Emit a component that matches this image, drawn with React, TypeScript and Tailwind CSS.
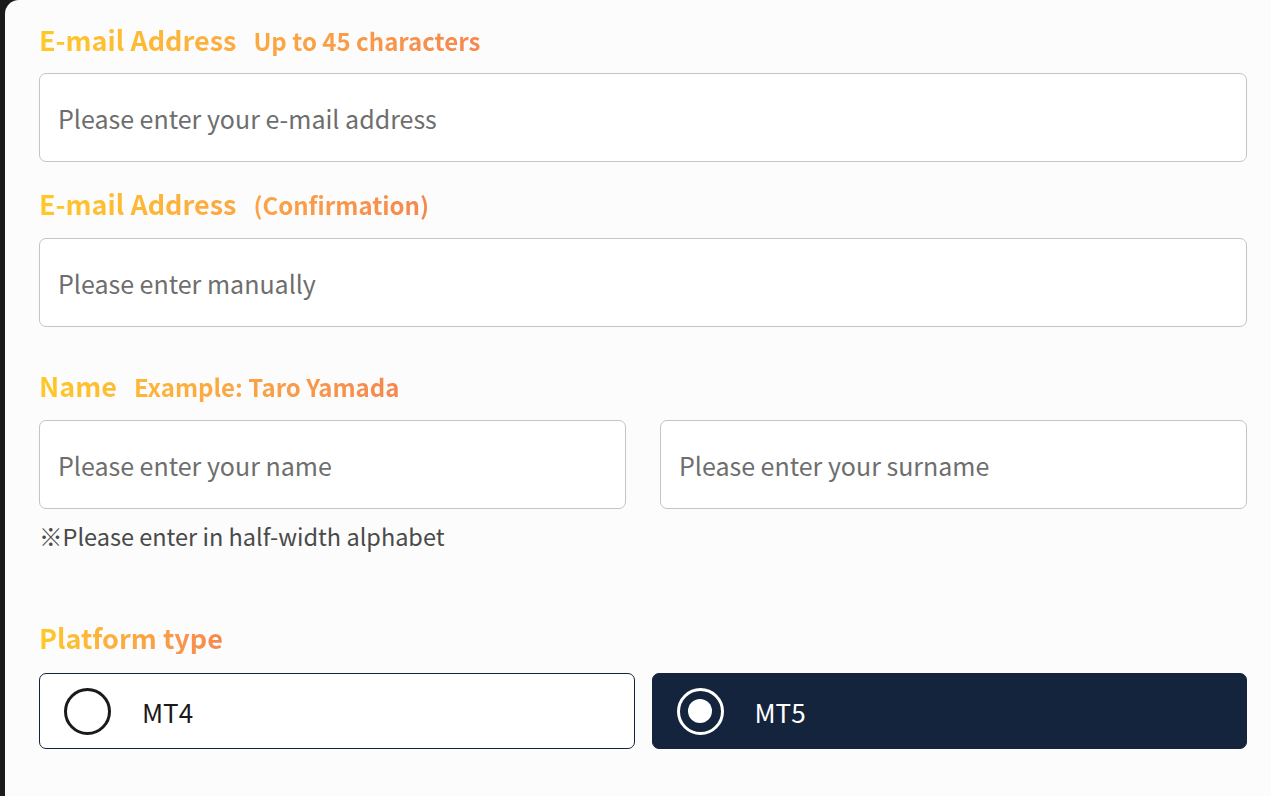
import { useState } from "react";

const FONT = "font-['Noto_Sans_CJK_JP','Noto_Sans',sans-serif]";

function Label({ main, sub }: { main: string; sub?: string }) {
    return (
        <div className="h-[32px] leading-[32px] flex">
            <span className="inline-block bg-gradient-to-r from-[#ffc826] to-[#f5874f] bg-clip-text text-transparent font-bold whitespace-nowrap">
                <span className="text-[27px]">{main}</span>
                {sub && <span className="text-[24px] ml-[17px]">{sub}</span>}
            </span>
        </div>
    );
}

function Field({ placeholder }: { placeholder: string }) {
    return (
        <input
            className="w-full h-[89px] bg-white border border-[#c4c4c4] rounded-[7px] pl-[18px] text-[25px] text-[#333] placeholder:text-[#6e6e6e] outline-none"
            placeholder={placeholder}
        />
    );
}

export default function App() {
    const [platform, setPlatform] = useState("MT5");

    return (
        <div className={`h-[796px] w-full overflow-hidden bg-[#1b1b1b] pl-[5px] ${FONT}`}>
            <div className="h-full bg-[#fcfcfc] rounded-tl-[14px] pl-[34px] pr-[24px] pt-[24px]">
                <Label main="E-mail Address" sub="Up to 45 characters" />
                <div className="mt-[17px]">
                    <Field placeholder="Please enter your e-mail address" />
                </div>

                <div className="mt-[26px]">
                    <Label main="E-mail Address" sub="(Confirmation)" />
                </div>
                <div className="mt-[18px]">
                    <Field placeholder="Please enter manually" />
                </div>

                <div className="mt-[43px]">
                    <Label main="Name" sub="Example: Taro Yamada" />
                </div>
                <div className="mt-[18px] grid grid-cols-2 gap-[34px]">
                    <Field placeholder="Please enter your name" />
                    <Field placeholder="Please enter your surname" />
                </div>
                <p className="mt-[11px] h-[32px] leading-[32px] text-[23.5px] text-[#4a4a4a]">
                    ※Please enter in half-width alphabet
                </p>

                <div className="mt-[70px]">
                    <Label main="Platform type" />
                </div>
                <div className="mt-[19px] grid grid-cols-2 gap-[17px]">
                    {["MT4", "MT5"].map((p) => {
                        const on = platform === p;
                        return (
                            <button
                                key={p}
                                onClick={() => setPlatform(p)}
                                className={`h-[76px] rounded-[7px] flex items-center pl-[24px] gap-[31px] border-[1.5px] border-[#13243c] ${on ? "bg-[#13243c] text-white" : "bg-white text-[#1a1a1a]"}`}
                            >
                                <span
                                    className={`w-[47px] h-[47px] rounded-full border-[3px] flex items-center justify-center ${on ? "border-white" : "border-[#1a1a1a]"}`}
                                >
                                    {on && <span className="w-[24px] h-[24px] rounded-full bg-white" />}
                                </span>
                                <span className="text-[26px]">{p}</span>
                            </button>
                        );
                    })}
                </div>
            </div>
        </div>
    );
}
